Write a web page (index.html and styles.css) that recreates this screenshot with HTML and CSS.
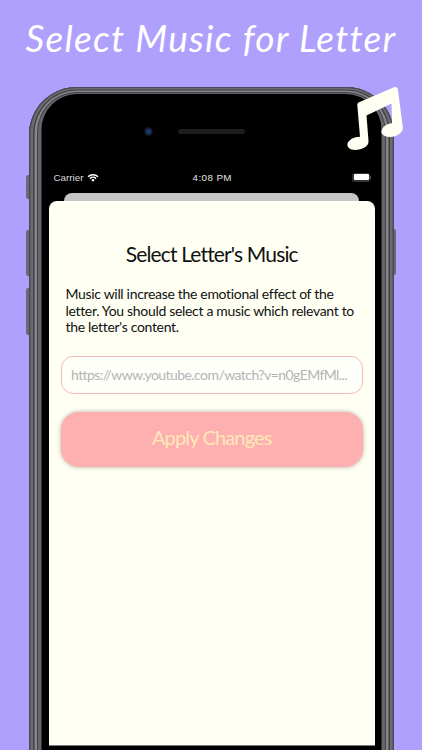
FILE: index.html
```html
<!DOCTYPE html>
<html lang="en">
<head>
<meta charset="utf-8">
<title>Select Music for Letter</title>
<link rel="stylesheet" href="styles.css">
</head>
<body>
<div class="page">
  <h1 class="headline">Select Music for Letter</h1>
  <div class="device">
    <span class="btn btn-mute"></span>
    <span class="btn btn-up"></span>
    <span class="btn btn-down"></span>
    <span class="btn btn-power"></span>
    <div class="device-screen">
      <div class="sensors">
        <span class="camera"></span>
        <span class="speaker"></span>
      </div>
      <div class="status">
        <div class="status-left">
          <span>Carrier</span>
          <svg class="wifi" viewBox="0 0 14 10" aria-hidden="true">
            <path d="M0.6 3.4A9.2 9.2 0 0 1 13.4 3.4L12.2 4.7A7.4 7.4 0 0 0 1.8 4.7Z" fill="#fff"/>
            <path d="M2.8 5.6A6 6 0 0 1 11.2 5.6L10 6.9A4.2 4.2 0 0 0 4 6.9Z" fill="#fff"/>
            <path d="M5 7.8A2.9 2.9 0 0 1 9 7.8L7 9.9Z" fill="#fff"/>
          </svg>
        </div>
        <span class="status-time">4:08 PM</span>
        <div class="status-right">
          <span class="battery"><span class="battery-fill"></span></span>
          <span class="battery-tip"></span>
        </div>
      </div>
      <div class="sheet-back"></div>
      <div class="sheet">
        <h2 class="sheet-title">Select Letter's Music</h2>
        <p class="sheet-text">Music will increase the emotional effect of the letter. You should select a music which relevant to the letter's content.</p>
        <div class="url-field"><span class="url-text">https://www.youtube.com/watch?v=n0gEMfMl...</span></div>
        <div class="apply">Apply Changes</div>
      </div>
    </div>
  </div>
  <svg class="note" viewBox="0 0 60 68" aria-hidden="true">
    <path d="M11.5 16.5L47 1.2Q50.5 0 50.9 3.5L55.8 41C56.4 46.5 50 51 43 51C37 51 33.6 47.8 34.5 44.5C35.6 40.5 40.5 37.4 45 37.2L44.5 17.5L19.5 29.5L21.5 55C22 60.5 15 64 8 64C3 64 0 61.2 0.4 58C1.2 54 7 50.8 13 50.8L10.3 19Q10.2 17.3 11.5 16.5Z" fill="#fffff3"/>
  </svg>
</div>
</body>
</html>
```
FILE: styles.css
```css
* { box-sizing: border-box; }
html, body { margin: 0; padding: 0; }
body { width: 422px; height: 750px; overflow: hidden; background: #b0a0fe; }
.page { position: relative; width: 422px; height: 750px; overflow: hidden; background: #b0a0fe; }
.headline {
  margin: 0;
  height: 87px;
  padding-top: 16px;
  text-align: center;
  font-family: "Lato", sans-serif;
  font-style: italic;
  font-weight: 400;
  font-size: 37px;
  line-height: 44px;
  letter-spacing: 1.25px;
  color: #fff;
  white-space: nowrap;
}
.device {
  position: relative;
  width: 365px;
  height: 720px;
  margin-left: 29px;
  border-radius: 48px 48px 0 0;
  background: #000;
  box-shadow:
    inset 0 -0.5px 0 1.5px #4a4a55,
    inset 0 -1.5px 0 4px #6c6c70,
    inset 0 -2px 0 5.5px #3f3f44,
    inset 0 -3px 0 8px #85858a,
    inset 0 -3px 0 9px #444448,
    inset 0 -5.5px 0 12.5px #66666a;
}
.btn { position: absolute; display: block; width: 3px; background: #6a6a74; }
.btn-mute { left: -3px; top: 88px; height: 24px; border-radius: 2px 0 0 2px; }
.btn-up { left: -3px; top: 143px; height: 46px; border-radius: 2px 0 0 2px; }
.btn-down { left: -3px; top: 201px; height: 47px; border-radius: 2px 0 0 2px; }
.btn-power { right: -2px; top: 142px; width: 2px; height: 46px; border-radius: 0 2px 2px 0; }
.device-screen { display: flex; flex-direction: column; padding: 39px 19px 0 19.5px; }
.sensors { display: flex; align-items: center; height: 10px; padding-left: 95px; gap: 25px; }
.camera { width: 9px; height: 9px; border-radius: 50%; background: radial-gradient(circle, #1c3a78 0 25%, #10131c 60%); }
.speaker { width: 67px; height: 5px; border-radius: 3px; background: #1e1e20; }
.status {
  display: grid;
  grid-template-columns: 1fr auto 1fr;
  align-items: center;
  height: 14px;
  margin-top: 34px;
  padding: 0 4px 0 5px;
  font-family: "Liberation Sans", sans-serif;
  font-size: 9.8px;
  color: #dcdcdc;
}
.status-left { display: flex; align-items: center; gap: 4px; }
.wifi { width: 12px; height: 9px; }
.status-time { letter-spacing: 0.4px; color: #e4e4e4; }
.status-right { display: flex; align-items: center; justify-content: flex-end; }
.battery { display: flex; width: 18px; height: 9px; padding: 1.5px; border-radius: 2.5px; background: #333; }
.battery-fill { flex: 1; border-radius: 1px; background: #fff; }
.battery-tip { width: 1px; height: 3px; background: #555; }
.sheet-back { height: 16px; margin: 9px 16px -8px 15.5px; border-radius: 8px 8px 0 0; background: #c6c6c6; }
.sheet {
  position: relative;
  display: flex;
  flex-direction: column;
  height: 545px;
  padding: 40px 12px 0;
  border-radius: 8px 8px 0 0;
  border-bottom: 1px solid #777;
  background: #fffff3;
}
.sheet-title {
  margin: 0;
  text-align: center;
  font-family: "Lato", sans-serif;
  font-weight: 400;
  font-size: 21px;
  line-height: 26px;
  letter-spacing: -0.85px;
  color: #111;
}
.sheet-text {
  margin: 19px 0 0;
  padding: 0 5px;
  font-family: "Lato", sans-serif;
  font-weight: 400;
  font-size: 14px;
  line-height: 16.5px;
  letter-spacing: -0.32px;
  color: #111;
}
.url-field {
  display: flex;
  align-items: center;
  height: 38px;
  margin-top: 20px;
  padding: 0 9.5px;
  border: 1.5px solid #f8b8b8;
  border-radius: 12px;
  background: #fffffa;
}
.url-text {
  font-family: "Lato", sans-serif;
  font-weight: 400;
  font-size: 14px;
  letter-spacing: -0.56px;
  color: #b4b4b4;
  white-space: nowrap;
}
.apply {
  display: flex;
  align-items: center;
  justify-content: center;
  height: 55px;
  margin-top: 18px;
  padding-bottom: 5px;
  border-radius: 18px;
  background: #feb0b0;
  box-shadow: 0 0 4px rgba(90, 70, 70, 0.45);
  font-family: "Lato", sans-serif;
  font-weight: 400;
  font-size: 20px;
  letter-spacing: -0.85px;
  color: #fde8b8;
}
.note { position: absolute; left: 347px; top: 86px; width: 60px; height: 68px; }
```
